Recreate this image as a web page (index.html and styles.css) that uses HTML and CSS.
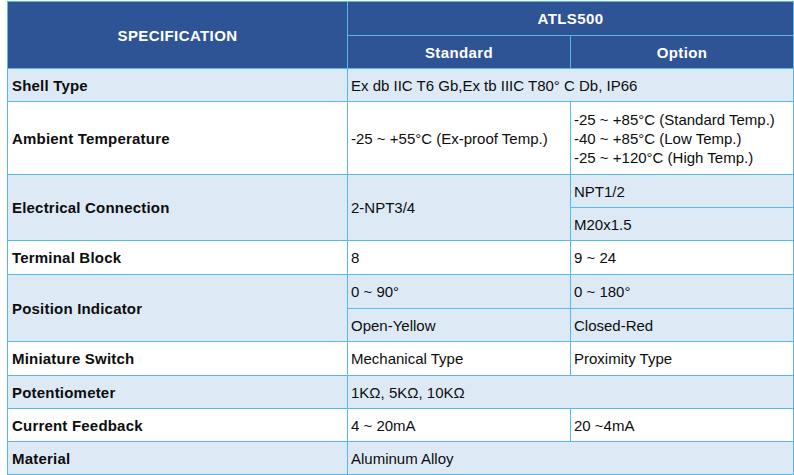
FILE: index.html
```html
<!DOCTYPE html>
<html>
<head>
<meta charset="utf-8">
<link rel="stylesheet" href="styles.css">
</head>
<body>
<table class="spec">
  <colgroup>
    <col class="c-label">
    <col class="c-std">
    <col class="c-opt">
  </colgroup>
  <thead>
    <tr class="h1">
      <th rowspan="2" class="hd">SPECIFICATION</th>
      <th colspan="2" class="hd">ATLS500</th>
    </tr>
    <tr class="h2">
      <th class="hd">Standard</th>
      <th class="hd">Option</th>
    </tr>
  </thead>
  <tbody>
    <tr class="alt r33">
      <td class="lbl">Shell Type</td>
      <td colspan="2">Ex db IIC T6 Gb,Ex tb IIIC T80° C Db, IP66</td>
    </tr>
    <tr class="r73">
      <td class="lbl">Ambient Temperature</td>
      <td>-25 ~ +55°C (Ex-proof Temp.)</td>
      <td class="multi">-25 ~ +85°C (Standard Temp.)<br>-40 ~ +85°C (Low Temp.)<br>-25 ~ +120°C (High Temp.)</td>
    </tr>
    <tr class="alt r33">
      <td rowspan="2" class="lbl">Electrical Connection</td>
      <td rowspan="2">2-NPT3/4</td>
      <td>NPT1/2</td>
    </tr>
    <tr class="alt r33">
      <td>M20x1.5</td>
    </tr>
    <tr class="r34">
      <td class="lbl">Terminal Block</td>
      <td>8</td>
      <td>9 ~ 24</td>
    </tr>
    <tr class="alt r34">
      <td rowspan="2" class="lbl">Position Indicator</td>
      <td>0 ~ 90°</td>
      <td>0 ~ 180°</td>
    </tr>
    <tr class="alt r33">
      <td>Open-Yellow</td>
      <td>Closed-Red</td>
    </tr>
    <tr class="r34">
      <td class="lbl">Miniature Switch</td>
      <td>Mechanical Type</td>
      <td>Proximity Type</td>
    </tr>
    <tr class="alt r33">
      <td class="lbl">Potentiometer</td>
      <td colspan="2">1KΩ, 5KΩ, 10KΩ</td>
    </tr>
    <tr class="r33">
      <td class="lbl">Current Feedback</td>
      <td>4 ~ 20mA</td>
      <td>20 ~4mA</td>
    </tr>
    <tr class="alt r33">
      <td class="lbl">Material</td>
      <td colspan="2">Aluminum Alloy</td>
    </tr>
  </tbody>
</table>
</body>
</html>
```
FILE: styles.css
```css
html, body {
  margin: 0;
  padding: 0;
  background: #ffffff;
}

body {
  padding: 1px 0 0 7px;
  font-family: "Liberation Sans", Arial, sans-serif;
}

.spec {
  border-collapse: collapse;
  table-layout: fixed;
  width: 786px;
  font-size: 15px;
  color: #0d0d0d;
}

.c-label { width: 340px; }
.c-std { width: 223px; }
.c-opt { width: 223px; }

.spec th,
.spec td {
  border: 1px solid #56b9ea;
  padding: 0 0 0 3px;
  vertical-align: middle;
  text-align: left;
  white-space: nowrap;
  line-height: 19px;
}

.spec th.hd {
  background: #2f5496;
  color: #ffffff;
  font-weight: bold;
  text-align: center;
  letter-spacing: 0.4px;
  padding: 0;
}

.h1 { height: 34px; }
.h2 { height: 33px; }
.r33 { height: 33px; }
.r34 { height: 34px; }
.r73 { height: 73px; }

.alt td { background: #ddeaf6; }

.spec td.lbl {
  font-weight: bold;
  letter-spacing: 0.2px;
  padding-left: 4px;
}

.spec td.multi {
  line-height: 19px;
}
```
